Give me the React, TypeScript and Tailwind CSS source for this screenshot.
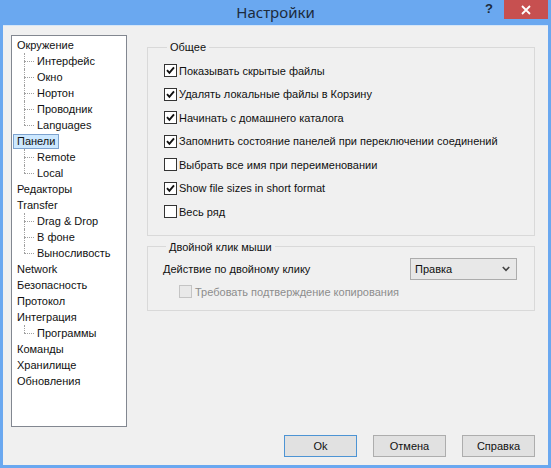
import type { ReactNode } from "react";

type TreeNode = { label: string; children?: string[] };

const tree: TreeNode[] = [
  { label: "Окружение", children: ["Интерфейс", "Окно", "Нортон", "Проводник", "Languages"] },
  { label: "Панели", children: ["Remote", "Local"] },
  { label: "Редакторы" },
  { label: "Transfer", children: ["Drag & Drop", "В фоне", "Выносливость"] },
  { label: "Network" },
  { label: "Безопасность" },
  { label: "Протокол" },
  { label: "Интеграция", children: ["Программы"] },
  { label: "Команды" },
  { label: "Хранилище" },
  { label: "Обновления" },
];

const options: [string, boolean][] = [
  ["Показывать скрытые файлы", true],
  ["Удалять локальные файлы в Корзину", true],
  ["Начинать с домашнего каталога", true],
  ["Запомнить состояние панелей при переключении соединений", true],
  ["Выбрать все имя при переименовании", false],
  ["Show file sizes in short format", true],
  ["Весь ряд", false],
];

const SELECTED = "Панели";

function CheckBox({ checked, disabled }: { checked: boolean; disabled?: boolean }): ReactNode {
  return (
    <span
      className={
        "flex h-[13px] w-[13px] shrink-0 items-center justify-center border " +
        (disabled ? "border-[#c4c4c4] bg-[#e9e9e9]" : "border-[#333333] bg-white")
      }
    >
      {checked && (
        <svg width="9" height="9" viewBox="0 0 9 9">
          <path d="M1 4.2 L3.4 6.8 L8 1.4" fill="none" stroke="#111" strokeWidth="1.9" />
        </svg>
      )}
    </span>
  );
}

function TreeChild({ label, last }: { label: string; last: boolean }): ReactNode {
  return (
    <div className="flex h-4 items-center">
      <span className="relative ml-[11px] h-4 w-[11px] shrink-0">
        <span
          className={
            "absolute left-0 top-0 border-l border-dotted border-[#a0a0a0] " +
            (last ? "h-[8px]" : "h-4")
          }
        />
        <span className="absolute left-0 top-[8px] w-[10px] border-t border-dotted border-[#a0a0a0]" />
      </span>
      <span className="ml-[1px] px-[1px]">{label}</span>
    </div>
  );
}

function Tree(): ReactNode {
  return (
    <div className="h-[392px] w-[116px] shrink-0 border border-[#828790] bg-white pl-[1px] pt-[1px]">
      {tree.map((node) => (
        <div key={node.label}>
          <div className="flex h-4 items-center">
            <span
              className={
                "flex h-[15px] items-center border px-[3px] " +
                (node.label === SELECTED ? "border-[#7da2ce] bg-[#cce8ff]" : "border-transparent")
              }
            >
              {node.label}
            </span>
          </div>
          {node.children?.map((child, i) => (
            <TreeChild key={child} label={child} last={i === node.children!.length - 1} />
          ))}
        </div>
      ))}
    </div>
  );
}

function Button({ label, primary }: { label: string; primary?: boolean }): ReactNode {
  return (
    <div
      className={
        "flex h-[22px] w-[73px] items-center justify-center border bg-[#e1e1e1] " +
        (primary ? "border-[#4d94d4]" : "border-[#adadad]")
      }
    >
      {label}
    </div>
  );
}

export default function App(): ReactNode {
  return (
    <div
      className="flex h-[468px] w-[551px] flex-col bg-[#6aa8f0] text-[11px] leading-[14px] text-[#111]"
      style={{ fontFamily: '"Liberation Sans", Arial, sans-serif' }}
    >
      {/* caption */}
      <div className="grid h-[25px] shrink-0 grid-cols-[1fr_auto_1fr]">
        <div />
        <div
          className="pt-[2px] text-[15px] leading-[20px] text-[#1c2b3c]"
          style={{ fontFamily: '"Noto Sans", "Open Sans", sans-serif' }}
        >
          Настройки
        </div>
        <div className="flex justify-end">
          <span className="mr-[11px] pt-[1px] text-[13px] font-bold leading-[16px] text-[#1c2b3c]">?</span>
          <span className="mr-[3px] flex h-[19px] w-[44px] items-center justify-center bg-[#c75050]">
            <svg width="10" height="10" viewBox="0 0 10 10">
              <path d="M1 1 L9 9 M9 1 L1 9" stroke="#fff" strokeWidth="1.8" />
            </svg>
          </span>
        </div>
      </div>

      {/* client area */}
      <div className="mx-[3px] mb-[3px] flex flex-1 flex-col border-t border-[#d6e6f7] bg-[#f0f0f0] pb-[8px] pl-[8px] pr-[13px] pt-[9px]">
        <div className="flex">
          <Tree />

          <div className="ml-[20px] flex flex-1 flex-col pt-[5px]">
            <fieldset className="border border-[#d9d9d9] pb-[11px] pl-[16px] pt-[5px]">
              <legend className="ml-[3px] px-[3px]">Общее</legend>
              {options.map(([label, checked]) => (
                <div key={label} className="flex h-[23.5px] items-center gap-[2px]">
                  <CheckBox checked={checked} />
                  <span>{label}</span>
                </div>
              ))}
            </fieldset>

            <fieldset className="mt-[4px] border border-[#d9d9d9] pb-[8px] pl-[15px] pr-[17px] pt-[4px]">
              <legend className="ml-[3px] px-[3px]">Двойной клик мыши</legend>
              <div className="flex h-[22px] items-center justify-between">
                <span>Действие по двойному клику</span>
                <div className="flex h-[22px] w-[107px] items-center justify-between border border-[#acacac] bg-[#e8e8e8] pl-[4px] pr-[6px]">
                  <span>Правка</span>
                  <svg width="8" height="6" viewBox="0 0 8 6">
                    <path d="M0.8 1 L4 4.4 L7.2 1" fill="none" stroke="#444" strokeWidth="1.6" />
                  </svg>
                </div>
              </div>
              <div className="ml-[16px] mt-[2px] flex h-[20px] items-center gap-[3px] text-[#8d8d8d]">
                <CheckBox checked={false} disabled />
                <span>Требовать подтверждение копирования</span>
              </div>
            </fieldset>
          </div>
        </div>

        <div className="mt-[8px] flex justify-end gap-[16px]">
          <Button label="Ok" primary />
          <Button label="Отмена" />
          <Button label="Справка" />
        </div>
      </div>
    </div>
  );
}
